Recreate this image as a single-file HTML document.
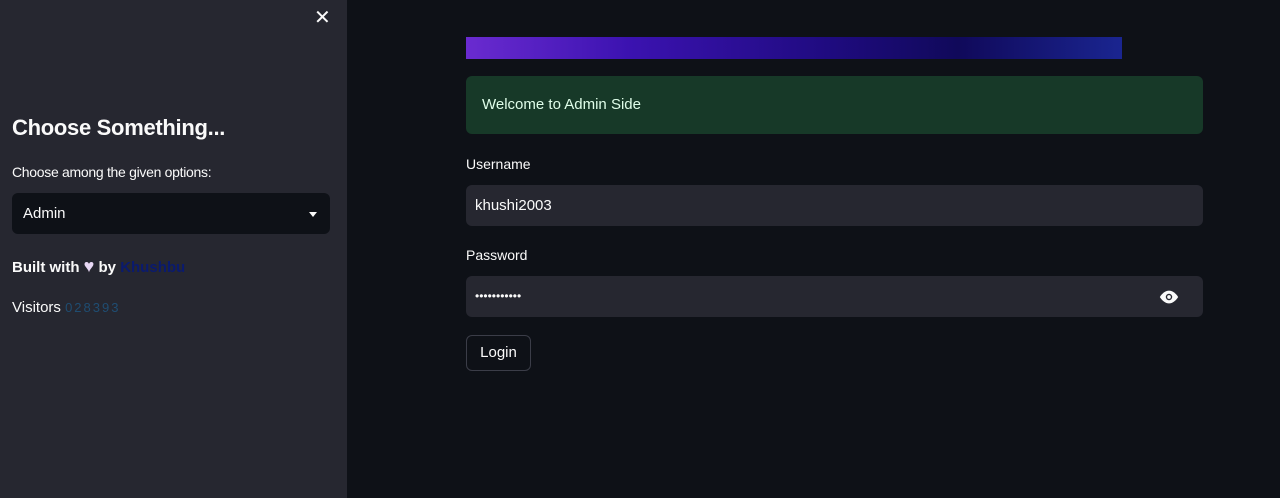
<!DOCTYPE html>
<html><head><style>
body{margin:0;width:1280px;height:498px;background:#0e1117;font-family:"Liberation Sans",sans-serif;color:#fafafa;overflow:hidden;position:relative}
.side{position:absolute;left:0;top:0;width:347px;height:498px;background:#262730}
.x{position:absolute;left:314px;top:5px;font-size:20px;color:#fafafa}
h2{position:absolute;left:12px;top:115px;margin:0;font-size:22px;font-weight:bold;letter-spacing:-0.3px}
.lbl{position:absolute;font-size:14px}
.sel{position:absolute;left:12px;top:193px;width:318px;height:41px;background:#0e1117;border-radius:6px}
.sel span{position:absolute;left:11px;top:12px;font-size:15px}
.tri{position:absolute;right:13px;top:19px;border:4px solid transparent;border-top:5px solid #fafafa}
.banner{position:absolute;left:466px;top:37px;width:656px;height:22px;background:linear-gradient(90deg,#6a2bd0 0%,#3b12b0 25%,#1f0b80 55%,#10095a 75%,#1a2590 100%)}
.alert{position:absolute;left:466px;top:76px;width:737px;height:58px;background:#173928;border-radius:6px}
.alert span{position:absolute;left:16px;top:20px;font-size:15px;color:#dffde9}
.inp{position:absolute;left:466px;width:737px;height:41px;background:#262730;border-radius:6px}
.inp span{position:absolute;left:9px;top:12px;font-size:15px}
.btn{position:absolute;left:466px;top:335px;width:63px;height:34px;border:1px solid #3b3d48;border-radius:6px;font-size:15px;text-align:center;line-height:34px}
</style></head><body>
<div class="side">
<div class="x">✕</div>
<h2>Choose Something...</h2>
<div class="lbl" style="left:12px;top:164px;font-size:14px;letter-spacing:-0.3px">Choose among the given options:</div>
<div class="sel"><span>Admin</span><div class="tri"></div></div>
<div class="lbl" style="left:12px;top:256px;font-size:15px;font-weight:bold">Built with <span style="color:#e8d8f5;font-size:18px">♥</span> by <span style="color:#0a1a6e">Khushbu</span></div>
<div class="lbl" style="left:12px;top:299px;font-size:15px">Visitors <span style="color:#1f4d72;font-size:13px;letter-spacing:2px">028393</span></div>
</div>
<div class="banner"></div>
<div class="alert"><span>Welcome to Admin Side</span></div>
<div class="lbl" style="left:466px;top:156px">Username</div>
<div class="inp" style="top:185px"><span>khushi2003</span></div>
<div class="lbl" style="left:466px;top:247px">Password</div>
<div class="inp" style="top:276px"><span style="top:13px;font-size:12px;letter-spacing:0">•••••••••••</span>
<svg style="position:absolute;right:23px;top:13px" width="22" height="16" viewBox="0 0 24 16"><path d="M12 1C6 1 2 8 2 8s4 7 10 7 10-7 10-7-4-7-10-7z" fill="#fafafa"/><circle cx="12" cy="8" r="3.5" fill="#262730"/><circle cx="12" cy="8" r="2" fill="#fafafa"/></svg></div>
<div class="btn">Login</div>
</body></html>
